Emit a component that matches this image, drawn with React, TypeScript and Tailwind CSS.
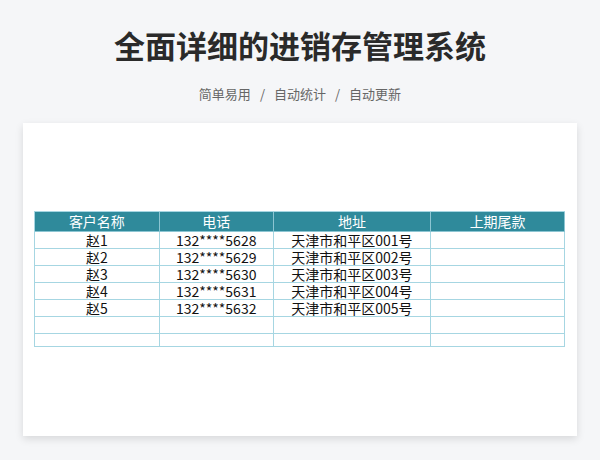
import React from "react";

const rows = [
  ["赵1", "132****5628", "天津市和平区001号", ""],
  ["赵2", "132****5629", "天津市和平区002号", ""],
  ["赵3", "132****5630", "天津市和平区003号", ""],
  ["赵4", "132****5631", "天津市和平区004号", ""],
  ["赵5", "132****5632", "天津市和平区005号", ""],
  ["", "", "", ""],
  ["", "", "", ""],
];

const widths = ["w-[125px]", "w-[114px]", "w-[158px]", "w-[134px]"];

export default function App() {
  return (
    <div className="w-[600px] h-[460px] bg-[#f5f6f8] flex flex-col items-center overflow-hidden font-['Noto_Sans_CJK_SC','Noto_Sans',sans-serif]">
      <h1 className="mt-[26px] text-[31px] leading-[38px] font-bold text-[#2a2a2a]">全面详细的进销存管理系统</h1>
      <div className="mt-[21px] text-[13px] leading-[18px] text-[#666] flex gap-[9px]">
        <span>简单易用</span>
        <span>/</span>
        <span>自动统计</span>
        <span>/</span>
        <span>自动更新</span>
      </div>
      <div className="mt-[20px] self-start ml-[23px] w-[554px] h-[313px] bg-white shadow-[0_3px_8px_rgba(0,0,0,0.12)] pt-[88px] pl-[11px]">
        <div className="flex flex-col w-[531px] border-l border-t border-[#a6d6e2]">
          <div className="flex h-[20px] bg-[#2f8a9b] text-white text-[14px] leading-[19px]">
            {["客户名称", "电话", "地址", "上期尾款"].map((h, j) => (
              <div key={h} className={`${widths[j]} text-center border-r border-b border-[#8cc5d2]`}>{h}</div>
            ))}
          </div>
          {rows.map((r, i) => (
            <div key={i} className={`flex ${i === 6 ? "h-[13px]" : "h-[17px]"} text-[14px] leading-[16px] text-[#111]`}>
              {r.map((c, j) => (
                <div key={j} className={`${widths[j]} text-center border-r border-b border-[#a6d6e2] whitespace-nowrap`}>{c}</div>
              ))}
            </div>
          ))}
        </div>
      </div>
    </div>
  );
}
